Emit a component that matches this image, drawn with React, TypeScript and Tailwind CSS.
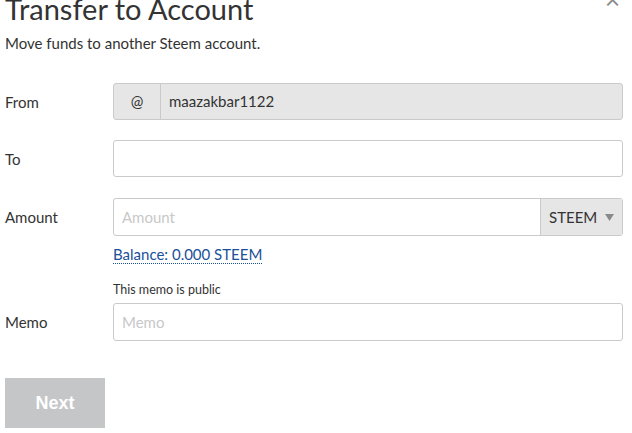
import React from 'react';

const font = { fontFamily: '"Lato", "Open Sans", sans-serif' };

const Row = ({ label, children }: { label: string; children: React.ReactNode }) => (
  <div className="flex">
    <div className="w-[108px] shrink-0 pt-[8px] text-[15px] text-[#333]">{label}</div>
    <div className="flex-1">{children}</div>
  </div>
);

const App = () => {
  return (
    <div className="relative w-[632px] h-[433px] overflow-hidden bg-white text-[#333]" style={font}>
      <button className="absolute right-[12px] top-[-14px] text-[26px] leading-none text-[#8a8a8a]">×</button>
      <div className="pl-[5px] pr-[9px]">
        <h1 className="-mt-[8px] text-[29px] leading-[34px] font-normal text-[#333]">Transfer to Account</h1>
        <p className="mt-[7px] text-[15px] leading-[20px]">Move funds to another Steem account.</p>

        <div className="mt-[30px] flex flex-col">
          <Row label="From">
            <div className="flex h-[37px] rounded-[3px] border border-[#cacaca] bg-[#e6e6e6] text-[15px]">
              <span className="flex w-[47px] items-center justify-center border-r border-[#cacaca]">@</span>
              <span className="flex items-center pl-[8px]">maazakbar1122</span>
            </div>
          </Row>
          <div className="mt-[20px]">
            <Row label="To">
              <div className="h-[37px] rounded-[3px] border border-[#cacaca] bg-white" />
            </Row>
          </div>
          <div className="mt-[21px]">
            <Row label="Amount">
              <div className="flex h-[38px] rounded-[3px] border border-[#cacaca] text-[15px]">
                <span className="flex flex-1 items-center pl-[8px] text-[#c8c8c8]">Amount</span>
                <span className="flex w-[82px] items-center justify-between border-l border-[#cacaca] bg-[#e6e6e6] pl-[8px] pr-[8px]">
                  STEEM
                  <svg width="9" height="7" viewBox="0 0 9 7"><path d="M0 0h9L4.5 7z" fill="#8a8a8a" /></svg>
                </span>
              </div>
              <div className="mt-[8px] text-[15px] leading-[20px]">
                <span className="border-b border-dotted border-[#1a5099] text-[#1a5099]">Balance: 0.000 STEEM</span>
              </div>
            </Row>
          </div>
          <div className="mt-[18px] flex">
            <div className="w-[108px] shrink-0" />
            <div className="text-[12.5px] leading-[16px]">This memo is public</div>
          </div>
          <div className="mt-[5px]">
            <Row label="Memo">
              <div className="flex h-[38px] items-center rounded-[3px] border border-[#cacaca] pl-[8px] text-[15px] text-[#c8c8c8]">Memo</div>
            </Row>
          </div>
        </div>

        <button
          className="mt-[37px] h-[50px] w-[100px] bg-[#c5c6c8] text-[18px] font-bold text-white"
          style={{ fontFamily: '"Liberation Sans", Arial, sans-serif' }}
        >
          Next
        </button>
      </div>
    </div>
  );
};

export default App;
